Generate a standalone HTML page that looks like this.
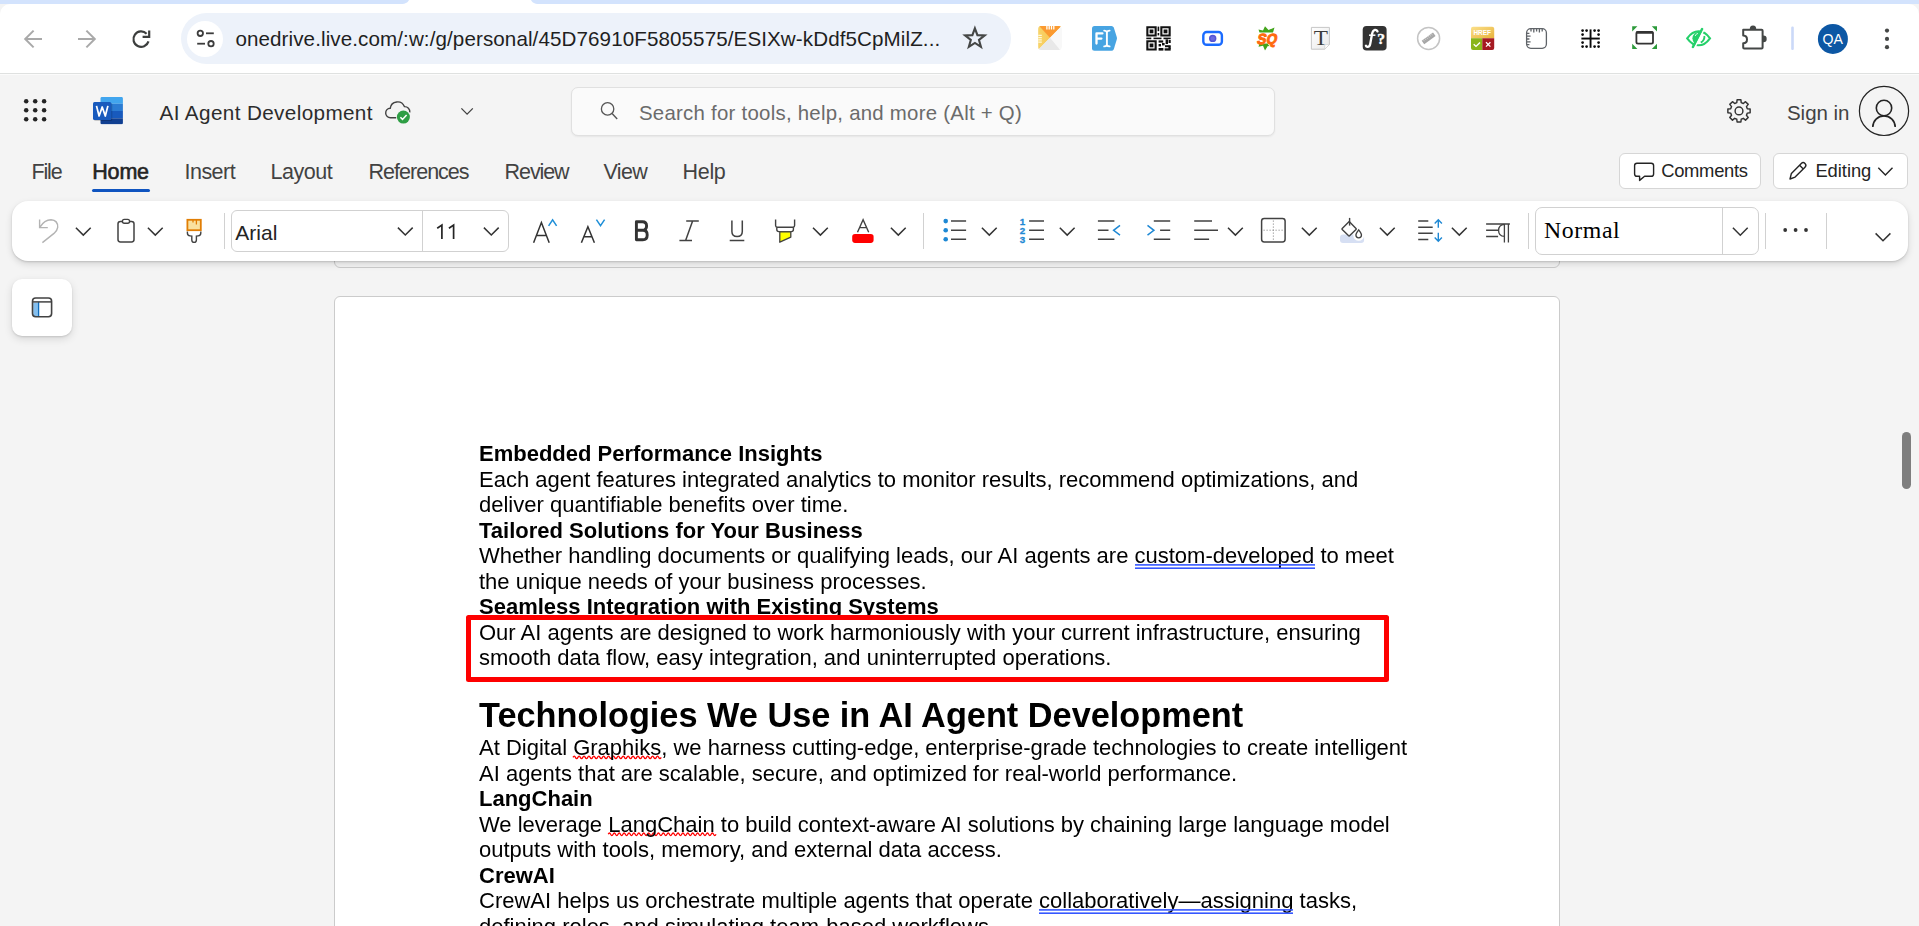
<!DOCTYPE html>
<html>
<head>
<meta charset="utf-8">
<title>AI Agent Development</title>
<style>
*{box-sizing:border-box;margin:0;padding:0}
html,body{width:1919px;height:926px;overflow:hidden;background:#f4f4f4;font-family:"Liberation Sans",sans-serif;color:#242424}
.abs{position:absolute}
#stage{position:relative;width:1919px;height:926px;overflow:hidden;background:#f4f4f4}
/* ---------- browser chrome ---------- */
#tabstrip{left:0;top:0;width:1919px;height:4px;background:#d3e3fd}
#chrome{left:0;top:4px;width:1919px;height:69px;background:#fff;border-radius:10px 10px 0 0}
#chromeline{left:0;top:73px;width:1919px;height:2px;background:linear-gradient(#dfe1e0 0,#dfe1e0 50%,#fbfbfb 50%,#fbfbfb 100%)}
#omni{left:181px;top:13px;width:830px;height:51px;border-radius:25.5px;background:#edf2fa}
#omni .site{left:6px;top:7.5px;width:36px;height:36px;border-radius:18px;background:#fff}
#url{left:235.4px;top:25px;font-size:20.6px;line-height:28px;color:#1f1f1f;white-space:nowrap;letter-spacing:.095px}
/* ---------- word header ---------- */
#title{left:159.6px;top:99.4px;font-size:20.7px;line-height:28px;color:#2c2c2c;white-space:nowrap;letter-spacing:.37px}
#search{left:571px;top:87px;width:704px;height:48.5px;border:1px solid #e0e0e0;border-radius:7px;background:#fafafa;box-shadow:0 1px 2px rgba(0,0,0,.06)}
#search span{position:absolute;left:67px;top:12px;font-size:20.4px;line-height:26px;color:#6b6b6b;white-space:nowrap;letter-spacing:.255px}
#signin{left:1787px;top:99.4px;font-size:20.5px;line-height:28px;color:#424242;white-space:nowrap;letter-spacing:-.05px}
/* ---------- menu tabs ---------- */
.tab{top:158px;font-size:21.5px;line-height:28px;color:#424242;white-space:nowrap}
.tab.sel{font-weight:normal;color:#242424;-webkit-text-stroke:.6px #242424}
#homeline{left:92px;top:189px;width:58px;height:3px;border-radius:1.5px;background:#0f54c0}
.pill{height:36px;top:153px;border:1px solid #d6d6d6;border-radius:6px;background:#fff;font-size:18.4px;line-height:34px;color:#242424;white-space:nowrap}
/* ---------- toolbar ---------- */
#toolbar{left:12px;top:201px;width:1896px;height:60px;border-radius:16px;background:#fff;box-shadow:0 1px 2px rgba(0,0,0,.14),0 3px 7px rgba(0,0,0,.13)}
.sep{top:213px;width:1px;height:36px;background:#d1d1d1}
#fontbox{left:231px;top:210px;width:278px;height:42px;border:1px solid #d1d1d1;border-radius:6px;background:#fff}
#fontbox .div{left:190px;top:0;width:1px;height:40px;background:#d1d1d1}
#stylebox{left:1535px;top:207px;width:224px;height:48px;border:1px solid #d1d1d1;border-radius:7px;background:#fff}
#stylebox .div{left:186px;top:0;width:1px;height:46px;background:#d1d1d1}
#sidebtn{left:12px;top:279px;width:60px;height:57px;border-radius:10px;background:#fff;box-shadow:0 1px 2px rgba(0,0,0,.12),0 3px 8px rgba(0,0,0,.12)}
/* ---------- document ---------- */
#prevpage{left:334px;top:215px;width:1226px;height:53px;background:transparent;border:1px solid #cbcbcb;border-radius:0 0 6px 6px}
#page{left:334px;top:296px;width:1226px;height:700px;background:#fff;border:1px solid #cbcbcb;border-radius:6px}
#doc{will-change:transform;left:478.6px;top:0;width:1000px;color:#000;font-size:22px;line-height:25.42px;white-space:nowrap}
#doc div{position:absolute;left:0;white-space:nowrap}
#doc b{font-weight:bold}
#doc div{line-height:25px}
#doc div.h{font-size:34.3px;font-weight:bold;line-height:40px}
#redbox{left:466px;top:615px;width:923px;height:67px;border:5px solid #fe0000;border-radius:2.5px}
#thumb{left:1902px;top:432px;width:9px;height:57px;border-radius:5px;background:#7e7e7e}
svg{position:absolute;overflow:visible}
</style>
</head>
<body>
<div id="stage">

<!-- DOCUMENT (under toolbar) -->
<div id="prevpage" class="abs"></div>
<div id="page" class="abs"></div>
<svg width="400" height="120" style="left:560px;top:740px" viewBox="560 740 400 120"><path d="M573.0,757.40 q1.225,-2.60 2.450,0 t2.450,0 t2.450,0 t2.450,0 t2.450,0 t2.450,0 t2.450,0 t2.450,0 t2.450,0 t2.450,0 t2.450,0 t2.450,0 t2.450,0 t2.450,0 t2.450,0 t2.450,0 t2.450,0 t2.450,0 t2.450,0 t2.450,0 t2.450,0 t2.450,0 t2.450,0 t2.450,0 t2.450,0 t2.450,0 t2.450,0 t2.450,0 t2.450,0 t2.450,0 t2.450,0 t2.450,0 t2.450,0 t2.450,0 t2.450,0 t2.450,0" fill="none" stroke="#ff0000" stroke-width="1.3"/><path d="M608.2,834.30 q1.225,-2.60 2.450,0 t2.450,0 t2.450,0 t2.450,0 t2.450,0 t2.450,0 t2.450,0 t2.450,0 t2.450,0 t2.450,0 t2.450,0 t2.450,0 t2.450,0 t2.450,0 t2.450,0 t2.450,0 t2.450,0 t2.450,0 t2.450,0 t2.450,0 t2.450,0 t2.450,0 t2.450,0 t2.450,0 t2.450,0 t2.450,0 t2.450,0 t2.450,0 t2.450,0 t2.450,0 t2.450,0 t2.450,0 t2.450,0 t2.450,0 t2.450,0 t2.450,0 t2.450,0 t2.450,0 t2.450,0 t2.450,0 t2.450,0 t2.450,0 t2.450,0 t2.450,0" fill="none" stroke="#ff0000" stroke-width="1.3"/></svg>
<div id="doc" class="abs">
<!--DOCTEXT-->
<div style="top:441px"><b>Embedded Performance Insights</b></div>
<div style="top:467px">Each agent features integrated analytics to monitor results, recommend optimizations, and</div>
<div style="top:492px">deliver quantifiable benefits over time.</div>
<div style="top:518px"><b>Tailored Solutions for Your Business</b></div>
<div style="top:543px">Whether handling documents or qualifying leads, our AI agents are <span class="dbl">custom-developed</span> to meet</div>
<div style="top:569px">the unique needs of your business processes.</div>
<div style="top:594px"><b>Seamless Integration with Existing Systems</b></div>
<div style="top:620px">Our AI agents are designed to work harmoniously with your current infrastructure, ensuring</div>
<div style="top:645px">smooth data flow, easy integration, and uninterrupted operations.</div>
<div class="h" style="top:695px">Technologies We Use in AI Agent Development</div>
<div style="top:735px">At Digital <span class="sq">Graphiks</span>, we harness cutting-edge, enterprise-grade technologies to create intelligent</div>
<div style="top:761px">AI agents that are scalable, secure, and optimized for real-world performance.</div>
<div style="top:786px"><b>LangChain</b></div>
<div style="top:812px">We leverage <span class="sq">LangChain</span> to build context-aware AI solutions by chaining large language model</div>
<div style="top:837px">outputs with tools, memory, and external data access.</div>
<div style="top:863px"><b>CrewAI</b></div>
<div style="top:888px">CrewAI helps us orchestrate multiple agents that operate <span class="dbl">collaboratively—assigning</span> tasks,</div>
<div style="top:914px">defining roles, and simulating team-based workflows.</div>
<!--/DOCTEXT-->
</div>
<svg width="300" height="400" style="left:1030px;top:560px" viewBox="1030 560 300 400"><g fill="#3557ff"><rect x="1135" y="564.1" width="180" height="1.6"/><rect x="1135" y="567.4" width="180" height="1.6"/><rect x="1039" y="909.1" width="254" height="1.6"/><rect x="1039" y="912.4" width="254" height="1.6"/></g></svg>
<div id="redbox" class="abs"></div>
<div id="thumb" class="abs"></div>

<!-- BROWSER CHROME -->
<div id="tabstrip" class="abs"></div>
<div id="chrome" class="abs"></div>
<div id="chromeline" class="abs"></div>
<!--CHROMEICONS-->
<div id="omni" class="abs"><div class="site abs"></div></div>
<div id="url" class="abs">onedrive.live.com/:w:/g/personal/45D76910F5805575/ESIXw-kDdf5CpMilZ...</div>
<svg id="chromesvg" width="1919" height="74" style="left:0;top:0" viewBox="0 0 1919 74">
 <!-- tab cutout -->
 <path d="M401,4 C406,4 408,2 409,0 L531,0 C532,2 534,4 539,4 Z" fill="#fff"/>
 <!-- back / forward / reload -->
 <g fill="none" stroke="#a9a9a9" stroke-width="2" stroke-linejoin="miter">
  <path d="M42,39 H26.5 M33.6,30.6 L25.2,39 L33.6,47.4"/>
  <path d="M78,39 H93.5 M86.4,30.6 L94.8,39 L86.4,47.4"/>
 </g>
 <g fill="none" stroke="#3c3e3d" stroke-width="2.2">
  <path d="M146.6,33.7 A7.7,7.7 0 1 0 148.5,41.4"/>
  <path d="M149.2,30.4 V36.9 H142.6"/>
 </g>
 <!-- tune icon -->
 <g fill="none" stroke="#3c3c3c" stroke-width="1.8">
  <circle cx="200.3" cy="33.3" r="2.7"/><path d="M206,33.3 H213.8"/>
  <circle cx="211" cy="43.7" r="2.7"/><path d="M197.2,43.7 H205"/>
 </g>
 <!-- star -->
 <path d="M974.90,28.30 L977.43,35.12 L984.70,35.42 L978.99,39.93 L980.95,46.93 L974.90,42.90 L968.85,46.93 L970.81,39.93 L965.10,35.42 L972.37,35.12 Z" fill="none" stroke="#454746" stroke-width="2.1" stroke-linejoin="miter"/>

 <!-- ext 1: orange/white folded square -->
 <g>
  <clipPath id="e1c"><rect x="1038.2" y="26" width="23.3" height="24" rx="3"/></clipPath>
  <defs><linearGradient id="e1y" x1="0" y1="0" x2="1" y2="0"><stop offset="0" stop-color="#f8d469"/><stop offset="1" stop-color="#f6bd47"/></linearGradient></defs>
  <g clip-path="url(#e1c)">
   <rect x="1038" y="26" width="24" height="24" fill="#f3f3f3"/>
   <path d="M1038,26 H1061.5 L1038,50 Z" fill="url(#e1y)"/>
   <path d="M1039.2,26 H1061.5 L1050,37.8 Z" fill="#fb9a30"/>
   <path d="M1061.5,26 V50 H1060 L1050,37.8 Z" fill="#f8f8f8"/>
   <path d="M1038,50 L1050,37.8 L1060,50 Z" fill="#e8e8e8"/>
   <g stroke="#fff" stroke-width="1.3"><path d="M1046.9,26 v3.6 M1049.2,26 v3.6 M1051.5,26 v3.6 M1053.8,26 v3.6"/></g>
   <g stroke="#fff8d8" stroke-width="1.3"><path d="M1038,35.3 h3.8 M1038,37.6 h3.8 M1038,39.9 h3.8 M1038,42.2 h3.8"/></g>
  </g>
 </g>
 <!-- ext 2: blue FI tag -->
 <g>
  <path d="M1094.5,26 H1111.5 Q1113,26 1113.8,27.5 L1116.9,37.5 Q1117.1,38.3 1116.9,39 L1113.8,49.2 Q1113,50.7 1111.5,50.7 H1094.5 Q1092,50.7 1092,48.2 V28.5 Q1092,26 1094.5,26 Z" fill="#47a4e2"/>
  <path d="M1096.5,43.6 V33.4 H1102.4 M1096.5,38.6 H1101.4" fill="none" stroke="#fff" stroke-width="2.3" stroke-linecap="round" stroke-linejoin="round"/>
  <path d="M1104.2,30.6 Q1106.3,30.6 1106.9,32.2 Q1107.5,30.6 1109.6,30.6 M1106.9,32 V45 M1104.2,46.4 Q1106.3,46.4 1106.9,44.8 Q1107.5,46.4 1109.6,46.4" fill="none" stroke="#fff" stroke-width="1.9" stroke-linecap="round"/>
 </g>
 <!-- ext 3: QR -->
 <g fill="#111">
  <path d="M1146.3,26.2 h10.4 v10.4 h-10.4 Z M1148.4,28.3 v6.2 h6.2 v-6.2 Z" fill-rule="evenodd"/>
  <rect x="1149.6" y="29.5" width="3.8" height="3.8"/>
  <path d="M1160.3,26.2 h10.4 v10.4 h-10.4 Z M1162.4,28.3 v6.2 h6.2 v-6.2 Z" fill-rule="evenodd"/>
  <rect x="1163.6" y="29.5" width="3.8" height="3.8"/>
  <path d="M1146.3,40.2 h10.4 v10.4 h-10.4 Z M1148.4,42.3 v6.2 h6.2 v-6.2 Z" fill-rule="evenodd"/>
  <rect x="1149.6" y="43.5" width="3.8" height="3.8"/>
  <rect x="1157.6" y="26.6" width="1.6" height="4.6"/><rect x="1157.6" y="33" width="1.6" height="2.4"/>
  <rect x="1146.3" y="37.6" width="5" height="1.6"/><rect x="1153.5" y="37.6" width="8" height="1.6"/><rect x="1163.5" y="37.6" width="7.2" height="1.6"/>
  <rect x="1158.6" y="40.4" width="4.6" height="2.2"/><rect x="1165.6" y="39.4" width="2.4" height="4.6"/><rect x="1168.6" y="40" width="2.1" height="3"/>
  <rect x="1158.6" y="44" width="2.4" height="2.4"/><rect x="1162" y="43" width="2.6" height="2.4"/><rect x="1165" y="45.2" width="5.7" height="2"/>
  <rect x="1158.6" y="48" width="4.8" height="2.6"/><rect x="1164.6" y="48.3" width="6.1" height="2.3"/><rect x="1168.4" y="46.6" width="2.3" height="2.4"/>
 </g>
 <!-- ext 4: blue record -->
 <rect x="1203.3" y="32" width="18.6" height="12.8" rx="3.4" fill="#fff" stroke="#1a6bff" stroke-width="2.4"/>
 <circle cx="1212.7" cy="38.4" r="3.7" fill="#5554d4"/><circle cx="1212.7" cy="38.4" r="2.2" fill="#6a6ae0"/>
 <!-- ext 5: SQ -->
 <g>
  <path d="M1258.5,29.5 L1263,30.6 L1265,26.2 L1268.5,30 L1274.5,27.6 L1273,32.5 H1259.5 Z" fill="#43a51c"/>
  <path d="M1258.5,46.8 L1263,45.8 L1265,50.4 L1267.8,46 L1269.5,46.2 L1267.5,43.5 H1259.5 Z" fill="#43a51c"/>
  <text x="0" y="0" transform="translate(1256.6 44.2) skewX(-12)" font-family="Liberation Sans" font-weight="bold" font-size="14.6" fill="#ff6a0d" stroke="#ff6a0d" stroke-width="1" textLength="19.6" lengthAdjust="spacingAndGlyphs">SQ</text>
 </g>
 <!-- ext 6: T page -->
 <g>
  <defs><linearGradient id="tg" x1="0" y1="0" x2="1" y2="1"><stop offset="0" stop-color="#ffffff"/><stop offset="1" stop-color="#e9e9e9"/></linearGradient></defs>
  <path d="M1311.4,27.4 H1329.4 V44.6 L1324.8,49.2 H1311.4 Z" fill="url(#tg)" stroke="#c6c6c6" stroke-width="1"/>
  <path d="M1329.4,44.6 H1324.8 V49.2 Z" fill="#fff" stroke="#d0d0d0" stroke-width=".7"/>
  <text x="1313.8" y="44.8" font-family="Liberation Serif" font-size="21.5" fill="#3c3c3c" textLength="14.2" lengthAdjust="spacingAndGlyphs">T</text>
 </g>
 <!-- ext 7: f? -->
 <g>
  <rect x="1362.7" y="26" width="23.9" height="24.5" rx="3.8" fill="#333"/>
  <path d="M1377.5,31.4 Q1376.6,29.7 1374.7,30 Q1372.7,30.5 1372.1,33.8 L1370.2,44 Q1369.6,47 1367.4,46.8 Q1366.3,46.6 1365.9,45.7" fill="none" stroke="#fff" stroke-width="2.3" stroke-linecap="round"/>
  <path d="M1369,35.2 H1375.4" stroke="#fff" stroke-width="1.5"/>
  <text x="1377.2" y="43.9" font-family="Liberation Serif" font-weight="bold" font-size="15.5" fill="#fff" stroke="#fff" stroke-width=".4">?</text>
 </g>
 <!-- ext 8: circle ruler -->
 <g>
  <circle cx="1428.6" cy="38.4" r="11" fill="#fff" stroke="#c4c4c4" stroke-width="1.5"/>
  <g transform="rotate(-36 1428.6 38.4)"><rect x="1421.6" y="36.3" width="14" height="4.3" fill="#a6a6a6"/><path d="M1423.6,36.3 v2 M1425.6,36.3 v2 M1427.6,36.3 v2 M1429.6,36.3 v2 M1431.6,36.3 v2 M1433.6,36.3 v2" stroke="#cfcfcf" stroke-width=".8"/></g>
 </g>
 <!-- ext 9: HREF -->
 <g>
  <defs><linearGradient id="hg" x1="0" y1="0" x2="1" y2="1"><stop offset="0" stop-color="#fbe08a"/><stop offset="1" stop-color="#e8b23a"/></linearGradient></defs>
  <path d="M1473,26.8 H1492.2 Q1494.2,26.8 1494.2,28.8 V38.2 H1471 V28.8 Q1471,26.8 1473,26.8 Z" fill="url(#hg)"/>
  <path d="M1471,38.2 H1482.3 V49.9 H1473 Q1471,49.9 1471,47.9 Z" fill="#8ab51b"/>
  <path d="M1482.3,38.2 H1494.2 V47.9 Q1494.2,49.9 1492.2,49.9 H1482.3 Z" fill="#a51a22"/>
  <text x="1473.4" y="35.3" font-family="Liberation Sans" font-weight="bold" font-size="6.3" fill="#fff" textLength="17.6" lengthAdjust="spacingAndGlyphs">HREF</text>
  <path d="M1473.7,44.3 L1476,46.4 L1480,42.4" fill="none" stroke="#fff" stroke-width="1.4"/>
  <path d="M1486,42.2 L1490.4,46.6 M1490.4,42.2 L1486,46.6" fill="none" stroke="#fff" stroke-width="1.3"/>
 </g>
 <!-- ext 10: rounded ruler square -->
 <g fill="none" stroke="#5f6368" stroke-width="1.3">
  <rect x="1526.6" y="28.7" width="19.8" height="19.6" rx="4.2" fill="#fff"/>
  <path d="M1531,29 v2.4 M1533.8,29 v3.6 M1536.6,29 v2.4 M1539.4,29 v3.6 M1542.2,29 v2.4"/>
  <path d="M1527,33.4 h2.4 M1527,36.2 h3.6 M1527,39 h2.4 M1527,41.8 h3.6 M1527,44.6 h2.4"/>
 </g>
 <!-- ext 11: dotted cross -->
 <g fill="#0b0b0b">
  <rect x="1581.4" y="37.6" width="18.4" height="1.9"/><rect x="1589.6" y="29.4" width="1.9" height="18.4"/>
  <g>
   <circle cx="1582.6" cy="30.6" r="1.35"/><circle cx="1586.6" cy="30.6" r="1.35"/><circle cx="1594.6" cy="30.6" r="1.35"/><circle cx="1598.6" cy="30.6" r="1.35"/>
   <circle cx="1582.6" cy="34.6" r="1.35"/><circle cx="1598.6" cy="34.6" r="1.35"/>
   <circle cx="1582.6" cy="42.6" r="1.35"/><circle cx="1598.6" cy="42.6" r="1.35"/>
   <circle cx="1582.6" cy="46.6" r="1.35"/><circle cx="1586.6" cy="46.6" r="1.35"/><circle cx="1594.6" cy="46.6" r="1.35"/><circle cx="1598.6" cy="46.6" r="1.35"/>
  </g>
 </g>
 <!-- ext 12: window w/ green corners -->
 <g>
  <path d="M1632.2,26.2 h5.2 l-5.2,5.2 Z M1657,26.2 h-5.2 l5.2,5.2 Z M1632.2,48.9 h5.2 l-5.2,-5.2 Z M1657,48.9 h-5.2 l5.2,-5.2 Z" fill="#2c9a3a"/>
  <rect x="1636.4" y="31.8" width="16.6" height="11.8" rx="1.6" fill="#fff" stroke="#333" stroke-width="1.8"/>
  <rect x="1636" y="31.2" width="17.4" height="2.6" rx="1" fill="#333"/>
 </g>
 <!-- ext 13: green eye -->
 <g>
  <clipPath id="eyeL"><path d="M1680,20 H1707.65 L1688.4,58 H1680 Z"/></clipPath>
  <clipPath id="eyeR"><path d="M1709.6,20 H1780 V58 H1690.4 Z"/></clipPath>
  <g clip-path="url(#eyeL)">
   <path d="M1687.2,38.3 C1690.6,33.6 1694.5,31.3 1698.6,31.3 C1702.7,31.3 1706.6,33.6 1710,38.3 C1706.6,43 1702.7,45.3 1698.6,45.3 C1694.5,45.3 1690.6,43 1687.2,38.3 Z" fill="#fff" stroke="#25d06a" stroke-width="2.1"/>
   <circle cx="1699" cy="38.3" r="6.6" fill="#25d06a"/>
   <path d="M1695.2,36 Q1695.8,33.8 1698,33.4" fill="none" stroke="#d9f8e6" stroke-width="1"/>
  </g>
  <path d="M1702.1,29 L1692.9,47" stroke="#25d06a" stroke-width="2.5" stroke-linecap="round"/>
  <g clip-path="url(#eyeR)">
   <path d="M1687.2,38.3 C1690.6,33.6 1694.5,31.3 1698.6,31.3 C1702.7,31.3 1706.6,33.6 1710,38.3 C1706.6,43 1702.7,45.3 1698.6,45.3 C1694.5,45.3 1690.6,43 1687.2,38.3 Z" fill="none" stroke="#25d06a" stroke-width="2.1"/>
   <path d="M1704.3,36 Q1705,40 1700.8,42.6" fill="none" stroke="#25d06a" stroke-width="1.9"/>
  </g>
 </g>
 <!-- ext 14: puzzle -->
 <g><path d="M1743.2,29.8 H1761.6 Q1762.6,29.8 1762.6,30.8 V47.4 Q1762.6,48.4 1761.6,48.4 H1744.2 Q1743.2,48.4 1743.2,47.4 V43.2 Q1747,43 1747,39.4 Q1747,35.8 1743.2,35.6 Z" fill="none" stroke="#444746" stroke-width="2" stroke-linejoin="round"/>
 <path d="M1749.8,29.4 Q1749.6,25.6 1753,25.6 Q1756.4,25.6 1756.2,29.4 Z" fill="#444746"/>
 <path d="M1763,35.6 Q1766.7,35.4 1766.7,38.9 Q1766.7,42.4 1763,42.2 Z" fill="#444746"/></g>
 <!-- separator -->
 <rect x="1791.2" y="26.5" width="2.6" height="23.5" rx="1.2" fill="#cbd9f8"/>
 <!-- avatar -->
 <circle cx="1832.9" cy="38.9" r="15" fill="#0c57a4"/>
 <text x="1822.6" y="44.2" font-family="Liberation Sans" font-size="15" fill="#fff" textLength="20.4" lengthAdjust="spacingAndGlyphs">QA</text>
 <!-- menu dots -->
 <g fill="#454746"><circle cx="1887" cy="30.6" r="2.1"/><circle cx="1887" cy="38.9" r="2.1"/><circle cx="1887" cy="47.2" r="2.1"/></g>
</svg>
<!--/CHROMEICONS-->

<!-- WORD HEADER -->
<!--WORDHEADER-->
<svg width="1919" height="80" style="left:0;top:74px" viewBox="0 74 1919 80">
 <!-- waffle -->
 <g fill="#242424">
  <circle cx="26.2" cy="101.2" r="2.25"/><circle cx="35.2" cy="101.2" r="2.25"/><circle cx="44.1" cy="101.2" r="2.25"/>
  <circle cx="26.2" cy="110.2" r="2.25"/><circle cx="35.2" cy="110.2" r="2.25"/><circle cx="44.1" cy="110.2" r="2.25"/>
  <circle cx="26.2" cy="119.2" r="2.25"/><circle cx="35.2" cy="119.2" r="2.25"/><circle cx="44.1" cy="119.2" r="2.25"/>
 </g>
 <!-- word logo -->
 <g>
  <clipPath id="wclip"><rect x="100.5" y="97.1" width="22.4" height="27.2" rx="1.4"/></clipPath>
  <g clip-path="url(#wclip)">
   <rect x="100" y="97" width="24" height="6.8" fill="#41a5ee"/>
   <rect x="100" y="103.8" width="24" height="7.2" fill="#2b7cd3"/>
   <rect x="100" y="111" width="24" height="7.3" fill="#185abd"/>
   <rect x="100" y="118.3" width="24" height="6.2" fill="#103f91"/>
  </g>
  <rect x="94" y="103" width="18.3" height="18" rx="1.5" fill="#000" opacity=".18"/>
  <rect x="93" y="102" width="18.3" height="17.9" rx="1.5" fill="#185abd"/>
  <path d="M96.5,105.9 L99.1,116 L102.2,107 L105.3,116 L107.9,105.9" fill="none" stroke="#fff" stroke-width="1.75" stroke-linejoin="round"/>
 </g>
 <!-- cloud check -->
 <g>
  <path d="M396.2,117.7 H390.6 A4.7,4.7 0 0 1 390.2,108.3 A7.4,7.4 0 0 1 404.4,106.6 A5.2,5.2 0 0 1 409.8,112.4" fill="none" stroke="#424242" stroke-width="1.4"/>
  <circle cx="403.4" cy="117.1" r="6.5" fill="#2e9e44"/>
  <path d="M400.4,117.3 L402.5,119.4 L406.6,115.1" fill="none" stroke="#fff" stroke-width="1.5"/>
 </g>
 <path d="M461.4,108.4 L467.1,114.1 L472.8,108.4" fill="none" stroke="#424242" stroke-width="1.3"/>
 <!-- gear -->
 <g transform="translate(1739 110.9)" fill="none" stroke="#333" stroke-width="1.45" stroke-linejoin="round">
  <circle r="3.9"/>
  <path d="M-2.21,-8.31 L-1.91,-11.14 L1.91,-11.14 L2.21,-8.31 L4.31,-7.44 L6.52,-9.23 L9.23,-6.52 L7.44,-4.31 L8.31,-2.21 L11.14,-1.91 L11.14,1.91 L8.31,2.21 L7.44,4.31 L9.23,6.52 L6.52,9.23 L4.31,7.44 L2.21,8.31 L1.91,11.14 L-1.91,11.14 L-2.21,8.31 L-4.31,7.44 L-6.52,9.23 L-9.23,6.52 L-7.44,4.31 L-8.31,2.21 L-11.14,1.91 L-11.14,-1.91 L-8.31,-2.21 L-7.44,-4.31 L-9.23,-6.52 L-6.52,-9.23 L-4.31,-7.44 Z"/>
 </g>
 <!-- avatar person -->
 <g fill="none" stroke="#242424">
  <circle cx="1884" cy="110.9" r="24.6" stroke-width="1.2"/>
  <circle cx="1884" cy="108" r="7.7" stroke-width="1.6"/>
  <path d="M1872.8,127 A11.2,11.2 0 0 1 1895.2,127" stroke-width="1.6"/>
 </g>
</svg>
<div id="title" class="abs">AI Agent Development</div>
<div id="search" class="abs"><span>Search for tools, help, and more (Alt + Q)</span></div>
<svg width="20" height="20" style="left:598px;top:99px" viewBox="598 99 20 20"><circle cx="607.6" cy="108.9" r="6.2" fill="none" stroke="#555" stroke-width="1.3"/><path d="M612.1,113.6 L617.2,119" stroke="#555" stroke-width="1.4"/></svg>
<div id="signin" class="abs">Sign in</div>
<!--/WORDHEADER-->

<!-- MENU -->
<!--MENU-->
<div class="abs tab" style="left:31.4px;letter-spacing:-1.1px">File</div>
<div class="abs tab sel" style="left:92.3px;letter-spacing:-.2px">Home</div>
<div class="abs tab" style="left:184.6px;letter-spacing:-.55px">Insert</div>
<div class="abs tab" style="left:270.5px;letter-spacing:-.45px">Layout</div>
<div class="abs tab" style="left:368.6px;letter-spacing:-1px">References</div>
<div class="abs tab" style="left:504.6px;letter-spacing:-1.1px">Review</div>
<div class="abs tab" style="left:603.4px;letter-spacing:-.6px">View</div>
<div class="abs tab" style="left:682.6px;letter-spacing:-.35px">Help</div>
<div id="homeline" class="abs"></div>
<div class="abs pill" style="left:1619px;width:142px"><span style="position:absolute;left:41.2px;top:0;letter-spacing:-.3px">Comments</span></div>
<div class="abs pill" style="left:1773px;width:135px"><span style="position:absolute;left:41.4px;top:0;letter-spacing:-.05px">Editing</span></div>
<svg width="300" height="40" style="left:1610px;top:150px" viewBox="1610 150 300 40">
 <path d="M1637,163.2 H1651.2 Q1653.6,163.2 1653.6,165.6 V173.9 Q1653.6,176.3 1651.2,176.3 H1644.6 L1639.6,180.4 V176.3 H1637 Q1634.6,176.3 1634.6,173.9 V165.6 Q1634.6,163.2 1637,163.2 Z" fill="none" stroke="#242424" stroke-width="1.4" stroke-linejoin="round"/>
 <path d="M1790,179 L1791.4,173.4 L1801.3,163.5 A2.6,2.6 0 0 1 1805,167.2 L1795.1,177.1 Z M1799.6,165.3 L1803.3,169" fill="none" stroke="#242424" stroke-width="1.4" stroke-linejoin="round"/>
 <path d="M1878.3,167.8 L1885.4,174.9 L1892.5,167.8" fill="none" stroke="#242424" stroke-width="1.4"/>
</svg>
<!--/MENU-->

<!-- TOOLBAR -->
<div id="toolbar" class="abs"></div>
<!--TOOLBARITEMS-->
<div class="abs sep" style="left:224px"></div>
<div class="abs sep" style="left:923px"></div>
<div class="abs sep" style="left:1528px"></div>
<div class="abs sep" style="left:1765px"></div>
<div class="abs sep" style="left:1826px"></div>
<div id="fontbox" class="abs"><div class="div abs"></div>
 <span style="position:absolute;left:3.2px;top:8px;font-size:21px;line-height:28px;letter-spacing:.05px;color:#242424">Arial</span>
 
</div>
<div id="stylebox" class="abs"><div class="div abs"></div>
 <span style="position:absolute;left:8px;top:8.3px;font-family:'Liberation Serif',serif;font-size:23.8px;line-height:28px;letter-spacing:.6px;color:#000">Normal</span>
</div>
<svg width="1896" height="60" style="left:12px;top:201px" viewBox="12 201 1896 60">
 <!-- undo (disabled) -->
 <path d="M39.6,219.4 V227.6 H47.8 M40,227.2 Q44.4,219.8 51,219.8 Q58,220.2 57.7,227.4 Q57.4,230.4 54,233.4 L42.4,242.6" fill="none" stroke="#b3b3b3" stroke-width="1.4"/>
 <path d="M75.9,227.7 L83.3,235.1 L90.7,227.7" fill="none" stroke="#333" stroke-width="1.5"/>
 <!-- clipboard -->
 <rect x="118" y="221.4" width="16" height="20.6" rx="2.4" fill="none" stroke="#424242" stroke-width="1.5"/>
 <rect x="122.4" y="219.4" width="7.2" height="3.8" rx="1.9" fill="#fff" stroke="#424242" stroke-width="1.4"/>
 <path d="M147.9,227.7 L155.3,235.1 L162.7,227.7" fill="none" stroke="#333" stroke-width="1.5"/>
 <!-- format painter -->
 <rect x="187.4" y="219.8" width="13.4" height="10.4" fill="#f9e1a0" stroke="#e17e05" stroke-width="1.8"/>
 <path d="M196.4,220 V224.4 M193,220 V222.4" stroke="#e17e05" stroke-width="1.3"/>
 <path d="M187.4,231.6 V233 Q187.4,235.6 190,235.9 L191.8,236.1 V240 Q191.8,242.4 194.1,242.4 Q196.4,242.4 196.4,240 V236.1 L198.2,235.9 Q200.8,235.6 200.8,233 V231.6" fill="none" stroke="#424242" stroke-width="1.4"/>
 <!-- chevrons in boxes -->
 <path d="M397.9,227.6 L405.3,235.0 L412.7,227.6" fill="none" stroke="#333" stroke-width="1.5"/>
 <path d="M483.9,227.6 L491.3,235.0 L498.7,227.6" fill="none" stroke="#333" stroke-width="1.5"/>
 <path d="M437.2,228.2 L441.9,225 V238.9 M448.9,228.2 L453.6,225 V238.9" fill="none" stroke="#242424" stroke-width="1.7" stroke-linejoin="miter"/>
 <!-- A^ -->
 <path d="M533.6,242.8 L541.4,222.6 L549.2,242.8 M536.4,235.6 H546.4" fill="none" stroke="#333" stroke-width="1.5"/>
 <path d="M548.6,225.8 L552.6,219.8 L556.6,225.8" fill="none" stroke="#1e8fd8" stroke-width="1.5"/>
 <!-- Av -->
 <path d="M581.4,242.8 L587.9,226.8 L594.4,242.8 M583.8,236.8 H592" fill="none" stroke="#333" stroke-width="1.5"/>
 <path d="M596.4,219.6 L600.5,225.6 L604.6,219.6" fill="none" stroke="#1e8fd8" stroke-width="1.5"/>
 <!-- B -->
 <path d="M636.4,221.8 V239.8 H642.8 Q647.2,239.8 647.2,235 Q647.2,230.4 643,230.3 H636.4 M636.4,221.8 H642.4 Q646.6,221.8 646.6,226 Q646.6,230.2 642.4,230.3" fill="none" stroke="#333" stroke-width="2.9" stroke-linejoin="round" stroke-linecap="round"/>
 <!-- I -->
 <path d="M686.2,221 H698.8 M679.4,240.5 H692 M692.6,221 L685.6,240.5" fill="none" stroke="#424242" stroke-width="1.5"/>
 <!-- U -->
 <path d="M731.9,220.4 V231.4 Q731.9,236.4 737.1,236.4 Q742.3,236.4 742.3,231.4 V220.4 M729.7,240.5 H744.3" fill="none" stroke="#424242" stroke-width="1.5"/>
 <!-- highlighter -->
 <path d="M775.6,219.4 V225.6 Q775.6,227.2 777.2,227.2 H793 Q794.6,227.2 794.6,225.6 V219.4 M776.8,227.4 V229.6 Q776.8,231.6 778.8,231.6 H791.4 Q793.4,231.6 793.4,229.6 V227.4" fill="none" stroke="#424242" stroke-width="1.4"/>
 <path d="M779.8,231.8 H790.8 V237.2 L779.8,242.2 Z" fill="#ffff00" stroke="#424242" stroke-width="1.3" stroke-linejoin="round"/>
 <path d="M813.0,227.7 L820.4,235.1 L827.8,227.7" fill="none" stroke="#333" stroke-width="1.5"/>
 <!-- font color -->
 <path d="M857.5,232.2 L863.1,219.6 L868.7,232.2 M859.8,227.6 H866.4" fill="none" stroke="#424242" stroke-width="1.4"/>
 <rect x="852.2" y="234" width="21.4" height="8.9" rx="2.8" fill="#ff0000"/>
 <path d="M890.9,227.7 L898.3,235.1 L905.7,227.7" fill="none" stroke="#333" stroke-width="1.5"/>
 <!-- bullets -->
 <g fill="#1e88d4"><circle cx="945.7" cy="221.1" r="2.3"/><circle cx="945.7" cy="230.2" r="2.3"/><circle cx="945.7" cy="239.2" r="2.3"/></g>
 <path d="M951,221.1 H966.1 M951,230.2 H966.1 M951,239.2 H966.1" stroke="#424242" stroke-width="1.5"/>
 <path d="M981.9,227.7 L989.3,235.1 L996.7,227.7" fill="none" stroke="#333" stroke-width="1.5"/>
 <!-- numbering -->
 <g font-family="Liberation Sans" font-weight="bold" font-size="9.8" fill="#1e88d4" stroke="#1e88d4" stroke-width=".3">
  <text x="1019.8" y="224.7">1</text><text x="1019.8" y="233.9">2</text><text x="1019.8" y="242.9">3</text>
 </g>
 <path d="M1029.1,221.1 H1044 M1029.1,230.2 H1044 M1029.1,239.2 H1044" stroke="#424242" stroke-width="1.5"/>
 <path d="M1059.8,227.7 L1067.2,235.1 L1074.6,227.7" fill="none" stroke="#333" stroke-width="1.5"/>
 <!-- outdent -->
 <path d="M1097.9,221.1 H1114.4 M1097.9,230.2 H1108.5 M1097.9,239.2 H1114.4" stroke="#424242" stroke-width="1.5"/>
 <path d="M1120,225.4 L1113.6,230.3 L1120,235.2" fill="none" stroke="#1e88d4" stroke-width="1.5"/>
 <!-- indent -->
 <path d="M1153.8,221.1 H1170.2 M1160.1,230.2 H1170.2 M1153.8,239.2 H1170.2" stroke="#424242" stroke-width="1.5"/>
 <path d="M1147.5,225.4 L1153.9,230.3 L1147.5,235.2" fill="none" stroke="#1e88d4" stroke-width="1.5"/>
 <!-- align -->
 <path d="M1194.2,221.1 H1212 M1194.2,230.2 H1218 M1194.2,239.2 H1209.1" stroke="#424242" stroke-width="1.5"/>
 <path d="M1228.0,227.7 L1235.4,235.1 L1242.8,227.7" fill="none" stroke="#333" stroke-width="1.5"/>
 <!-- borders -->
 <rect x="1261.6" y="218.4" width="23.5" height="23.5" rx="2.6" fill="none" stroke="#424242" stroke-width="1.5"/>
 <path d="M1273.35,220.6 V239.8 M1263.6,230.2 H1283.2" stroke="#7a7a7a" stroke-width="1" stroke-dasharray="1 2"/>
 <path d="M1301.9,227.7 L1309.3,235.1 L1316.7,227.7" fill="none" stroke="#333" stroke-width="1.5"/>
 <!-- shading -->
 <rect x="1340" y="234.5" width="24.1" height="8.4" rx="3" fill="#d6dff3"/>
 <path d="M1358.7,228.6 Q1354.6,233.4 1354.6,235.4 A4.1,4.1 0 0 0 1362.8,235.4 Q1362.8,233.4 1358.7,228.6 Z" fill="#fff" stroke="#fff" stroke-width="2.6"/>
 <path d="M1349.2,221.6 L1356,228.4 Q1356.6,229 1356,229.6 L1349.8,235.6 Q1349.2,236.2 1348.4,235.6 L1342.2,229.6 Q1341.6,229 1342.2,228.4 Z" fill="#fff" stroke="#424242" stroke-width="1.4" stroke-linejoin="round"/>
 <path d="M1349.6,217.9 V225.6" stroke="#424242" stroke-width="1.4"/>
 <path d="M1358.7,229.8 Q1355.9,233.4 1355.9,235 A2.8,2.8 0 0 0 1361.5,235 Q1361.5,233.4 1358.7,229.8 Z" fill="#fff" stroke="#424242" stroke-width="1.3"/>
 <path d="M1379.9,227.7 L1387.3,235.1 L1394.7,227.7" fill="none" stroke="#333" stroke-width="1.5"/>
 <!-- line spacing -->
 <path d="M1418.2,221.1 H1428.3 M1418.2,227.2 H1432.7 M1418.2,233.3 H1432.7 M1418.2,239.4 H1428.3" stroke="#424242" stroke-width="1.5"/>
 <path d="M1438.3,227.8 V220 M1434.7,223.4 L1438.3,219.8 L1441.9,223.4 M1438.3,232.8 V241 M1434.7,237.6 L1438.3,241.2 L1441.9,237.6" fill="none" stroke="#1e88d4" stroke-width="1.4"/>
 <path d="M1451.9,227.7 L1459.3,235.1 L1466.7,227.7" fill="none" stroke="#333" stroke-width="1.5"/>
 <!-- rtl paragraph -->
 <path d="M1486.1,224 H1509.9 M1486.1,230.2 H1498.1 M1486.1,236.5 H1498.1" stroke="#424242" stroke-width="1.4"/>
 <path d="M1504.4,224 V242.6 M1508.4,224 V242.6 M1504.4,224.4 Q1498.6,224.8 1498.6,230.4 Q1498.6,236 1504.4,236.4" fill="none" stroke="#424242" stroke-width="1.3"/>
 <!-- style chevron -->
 <path d="M1732.9,227.8 L1740.3,235.2 L1747.7,227.8" fill="none" stroke="#333" stroke-width="1.5"/>
 <!-- more dots -->
 <g fill="#333"><circle cx="1785.2" cy="230" r="1.9"/><circle cx="1795.6" cy="230" r="1.9"/><circle cx="1806" cy="230" r="1.9"/></g>
 <path d="M1875.6,233.4 L1883.0,240.8 L1890.4,233.4" fill="none" stroke="#333" stroke-width="1.5"/>
</svg>
<!--/TOOLBARITEMS-->

<div id="sidebtn" class="abs"></div>
<!--SIDEICON-->
<svg width="60" height="57" style="left:12px;top:279px" viewBox="12 279 60 57">
 <rect x="33.2" y="302.6" width="5.2" height="14" fill="#85bfee"/>
 <path d="M38.6,302 V316.8" stroke="#0f6cbd" stroke-width="1.3"/>
 <rect x="32.5" y="298" width="19.1" height="18.8" rx="3.2" fill="none" stroke="#424242" stroke-width="1.6"/>
 <path d="M32.5,301.9 H51.6" stroke="#424242" stroke-width="1.5"/>
</svg>
<!--/SIDEICON-->

</div>
</body>
</html>
